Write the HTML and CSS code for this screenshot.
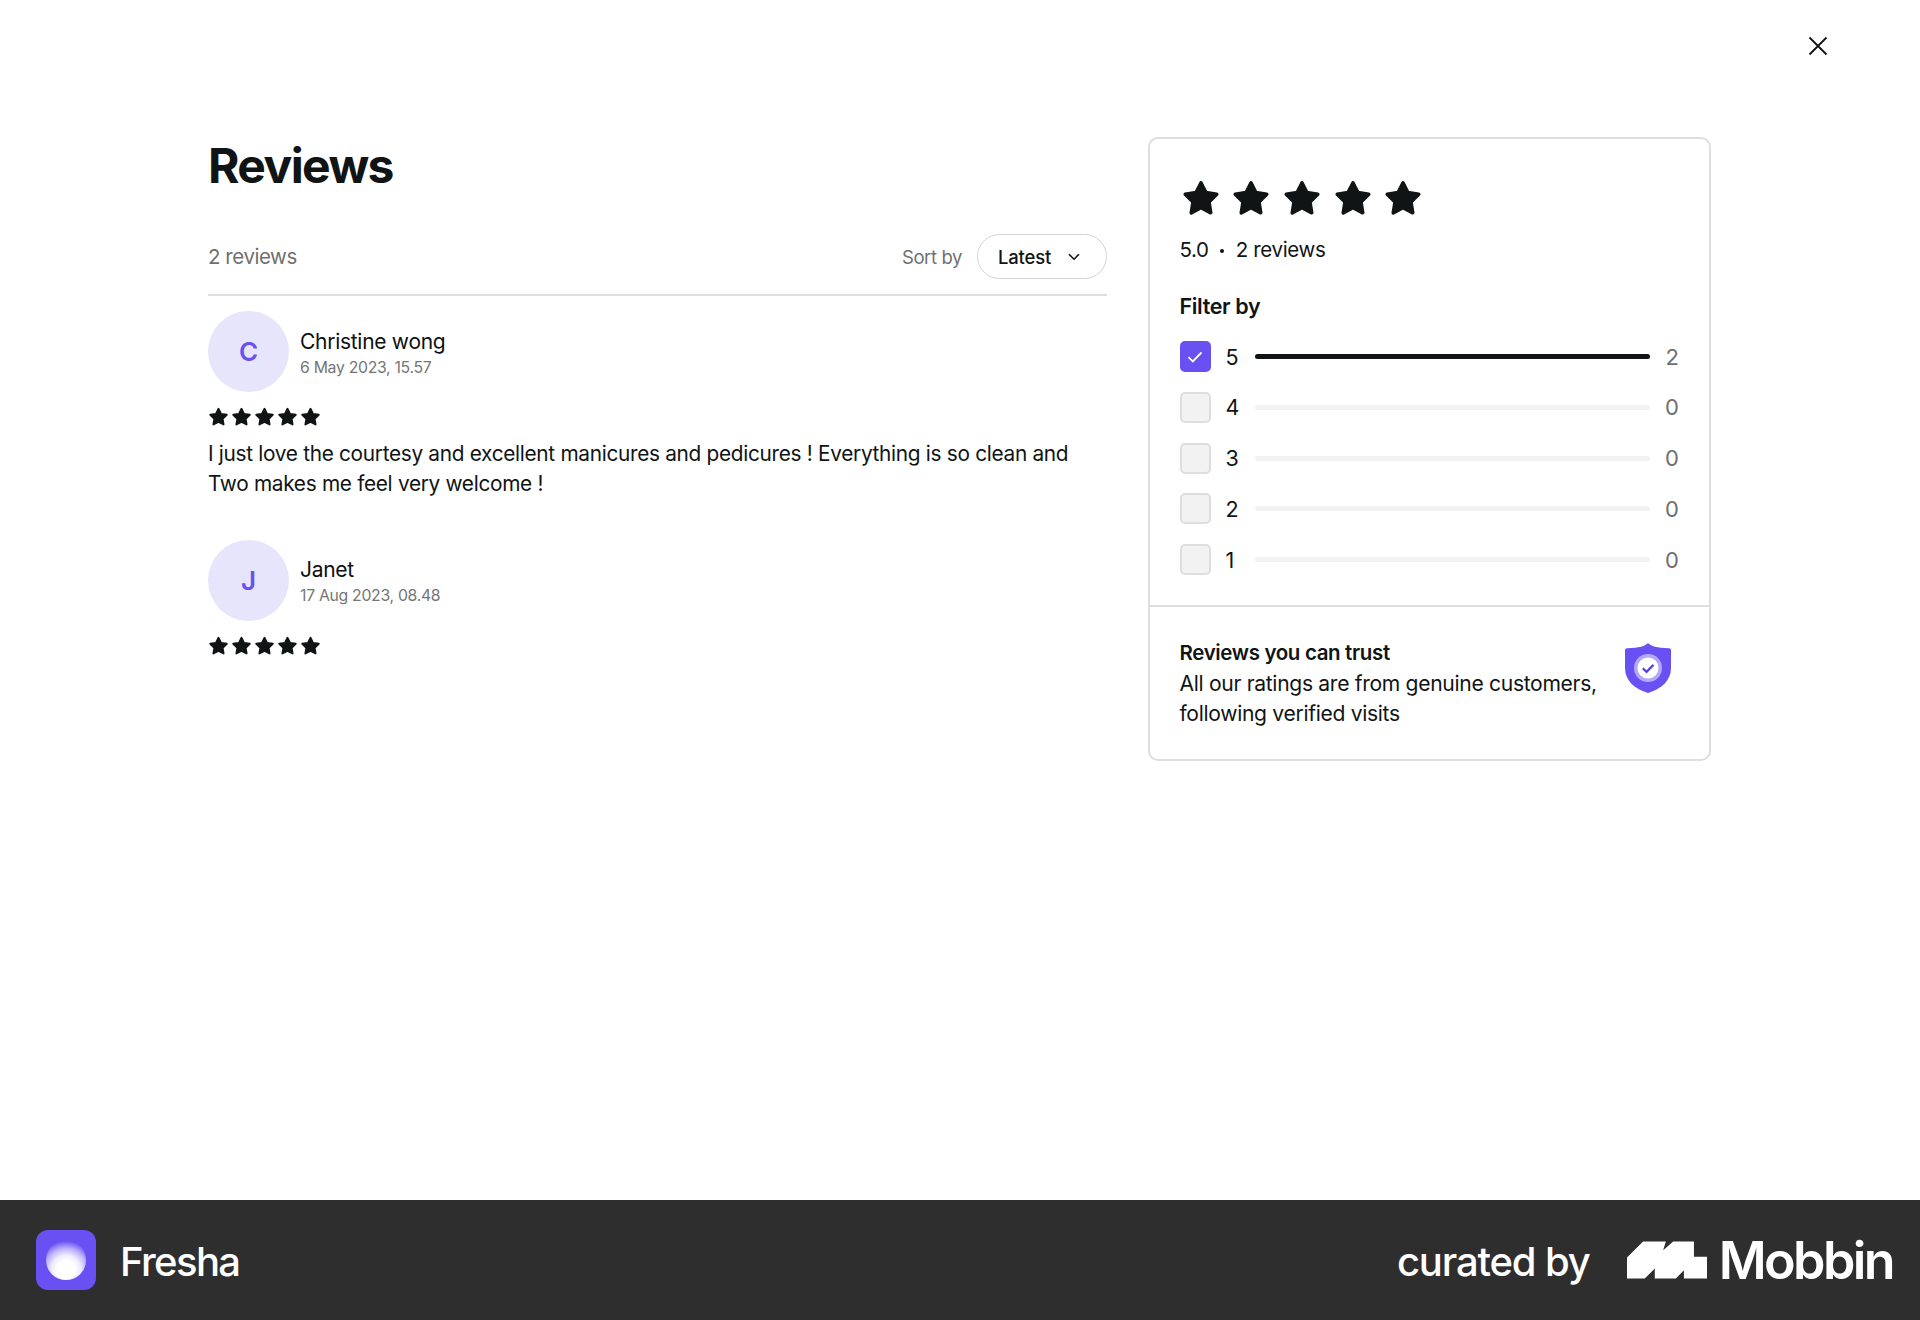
FILE: index.html
```html
<!DOCTYPE html>
<html lang="en">
<head>
<meta charset="utf-8">
<title>Fresha reviews</title>
<link rel="stylesheet" href="styles.css">
</head>
<body>
<svg class="defs" width="0" height="0" aria-hidden="true">
  <symbol id="star" viewBox="0 0 24 24">
    <path d="M12 3L14.82 8.62L21.03 9.56L16.57 13.98L17.58 20.19L12 17.3L6.42 20.19L7.43 13.98L2.97 9.56L9.18 8.62Z" fill="currentColor" stroke="currentColor" stroke-width="2" stroke-linejoin="round"/>
  </symbol>
</svg>
<div class="page">
  <main class="main">
    <button class="close" aria-label="Close">
      <svg viewBox="0 0 20 20" width="20" height="20"><path d="M1.5 1.5l17 17M18.5 1.5l-17 17" fill="none" stroke="#101414" stroke-width="1.8"/></svg>
    </button>
    <section class="reviews">
      <h1 class="title">Reviews</h1>
      <div class="toolbar">
        <span class="count">2 reviews</span>
        <div class="sort">
          <span class="sort-label">Sort by</span>
          <button class="sort-btn">Latest
            <svg viewBox="0 0 12 8" width="12" height="8"><path d="M1 1.200l5 5 5-5" fill="none" stroke="#101414" stroke-width="1.600"/></svg>
          </button>
        </div>
      </div>
      <article class="review">
        <div class="author">
          <div class="avatar">C</div>
          <div class="who">
            <div class="name">Christine wong</div>
            <div class="date">6 May 2023, 15.57</div>
          </div>
        </div>
        <div class="stars small">
          <svg><use href="#star"/></svg><svg><use href="#star"/></svg><svg><use href="#star"/></svg><svg><use href="#star"/></svg><svg><use href="#star"/></svg>
        </div>
        <p class="body">I just love the courtesy and excellent manicures and pedicures ! Everything is so clean and Two makes me feel very welcome !</p>
      </article>
      <article class="review">
        <div class="author">
          <div class="avatar">J</div>
          <div class="who">
            <div class="name">Janet</div>
            <div class="date">17 Aug 2023, 08.48</div>
          </div>
        </div>
        <div class="stars small">
          <svg><use href="#star"/></svg><svg><use href="#star"/></svg><svg><use href="#star"/></svg><svg><use href="#star"/></svg><svg><use href="#star"/></svg>
        </div>
      </article>
    </section>
    <aside class="card">
      <div class="card-top">
        <div class="stars large">
          <svg><use href="#star"/></svg><svg><use href="#star"/></svg><svg><use href="#star"/></svg><svg><use href="#star"/></svg><svg><use href="#star"/></svg>
        </div>
        <div class="score"><span>5.0</span><span class="dot"></span><span>2 reviews</span></div>
        <div class="filter-title">Filter by</div>
        <div class="filters">
          <div class="filter">
            <span class="check on"><svg viewBox="0 0 16 12" width="16" height="12"><path d="M1.500 6.200l4.300 4.200L14.500 1.500" fill="none" stroke="#fff" stroke-width="1.800"/></svg></span>
            <span class="num">5</span>
            <span class="bar"><span class="fill full"></span></span>
            <span class="total">2</span>
          </div>
          <div class="filter"><span class="check"></span><span class="num">4</span><span class="bar"></span><span class="total">0</span></div>
          <div class="filter"><span class="check"></span><span class="num">3</span><span class="bar"></span><span class="total">0</span></div>
          <div class="filter"><span class="check"></span><span class="num">2</span><span class="bar"></span><span class="total">0</span></div>
          <div class="filter"><span class="check"></span><span class="num">1</span><span class="bar"></span><span class="total">0</span></div>
        </div>
      </div>
      <div class="trust">
        <div class="trust-text">
          <div class="trust-title">Reviews you can trust</div>
          <div>All our ratings are from genuine customers, following verified visits</div>
        </div>
        <svg class="shield" viewBox="0 0 46 50" width="46" height="50">
          <path d="M23 0c2.500 3 9 5 21 5.300c1.300 0 2 .7 2 2V25c0 13-10 21-23 25C10 46 0 38 0 25V7.300c0-1.300.7-2 2-2C14 5 20.500 3 23 0z" fill="#6950f3"/>
          <circle cx="23" cy="25" r="14" fill="#b3a7f8"/>
          <circle cx="23" cy="25" r="10.500" fill="#fff"/>
          <path d="M17.800 25.300l3.700 3.600 7-7" fill="none" stroke="#5b43d6" stroke-width="2.200"/>
        </svg>
      </div>
    </aside>
  </main>
  <footer class="footer">
    <div class="brand">
      <div class="app-icon"><div class="glow"></div></div>
      <span class="app-name">Fresha</span>
    </div>
    <div class="curated">
      <span class="curated-by">curated by</span>
      <svg class="mobbin-mark" viewBox="52 32 239 111" width="80" height="38"><path d="M52 80L100 32H168L160 58L190 32H252V78H291V143H222V118L198 143H135V113L105 143H52z" fill="#fff"/></svg>
      <span class="mobbin">Mobbin</span>
    </div>
  </footer>
</div>
</body>
</html>
```
FILE: styles.css
```css
* { box-sizing: border-box; }
html, body { margin: 0; padding: 0; }
body { font-family: Inter, "Liberation Sans", sans-serif; color: #101414; background: #fff; }
.defs { position: absolute; }
.page { width: 1920px; height: 1320px; display: flex; flex-direction: column; }
.main { position: relative; flex: 1; display: flex; align-items: flex-start; gap: 41px; padding: 137px 0 0 208px; }
.close { position: absolute; top: 36px; right: 92px; width: 20px; height: 20px; padding: 0; border: 0; background: none; }
.close svg { display: block; }

.reviews { width: 899px; }
.title { margin: 1px 0 0; font-size: 48px; line-height: 56px; font-weight: 700; letter-spacing: -1.600px; }
.toolbar { margin-top: 40px; padding-bottom: 15px; border-bottom: 2px solid #dedede; display: flex; justify-content: space-between; align-items: center; }
.count { font-size: 20.500px; color: #6f6f6f; letter-spacing: -0.450px; }
.sort { display: flex; align-items: center; gap: 15px; }
.sort-label { font-size: 18.500px; color: #707070; letter-spacing: -0.400px; }
.sort-btn { width: 130px; height: 45px; padding: 0 0 0 20px; display: flex; align-items: center; gap: 17px; border: 1px solid #d3d3d3; border-radius: 23px; background: #fff; font: 500 18.500px Inter, sans-serif; color: #101414; letter-spacing: -0.200px; }

.review + .review { margin-top: 40px; }
.review:first-of-type { padding-top: 15px; }
.author { display: flex; align-items: center; gap: 11px; }
.avatar { width: 81px; height: 81px; border-radius: 50%; background: #e7e5fc; color: #6950f3; display: flex; align-items: center; justify-content: center; font-size: 26px; font-weight: 600; }
.who { padding-top: 3px; }
.name { font-size: 21px; line-height: 28px; font-weight: 400; letter-spacing: -0.280px; color: #0d1010; }
.date { font-size: 15.800px; line-height: 23px; color: #757575; letter-spacing: -0.300px; }
.stars { display: flex; color: #101414; }
.stars.small { margin: 13px 0 0 -1px; height: 24px; align-items: center; }
.stars.small svg { width: 23px; height: 22px; }
.stars.large { height: 43px; gap: 8.700px; }
.stars.large svg { width: 42px; height: 43px; }
.body { margin: 9.500px 0 0; font-size: 20.800px; line-height: 30.600px; letter-spacing: -0.300px; max-width: 880px; }

.card { width: 563px; height: 624px; border: 2px solid #dedede; border-radius: 10px; background: #fff; display: flex; flex-direction: column; }
.card-top { padding: 37.500px 30px 0 29.500px; height: 468px; border-bottom: 2px solid #dedede; }
.score { margin-top: 16px; display: flex; align-items: center; font-size: 20.500px; line-height: 28px; letter-spacing: -0.350px; }
.dot { width: 4px; height: 4px; margin: 2px 11.500px 0; border-radius: 50%; background: #101414; }
.filter-title { margin-top: 28px; font-size: 21.500px; line-height: 28px; font-weight: 600; letter-spacing: -0.350px; }
.filters { margin-top: 22px; display: flex; flex-direction: column; gap: 20.800px; }
.filter { display: flex; align-items: center; height: 30px; }
.check { width: 31px; height: 31px; flex: none; border: 2px solid #dedede; border-radius: 5px; background: #f2f2f2; display: flex; align-items: center; justify-content: center; }
.check.on { background: #6950f3; border-color: #6950f3; }
.num { width: 44.500px; padding-left: 15px; font-size: 21.500px; color: #101414; }
.bar { width: 395px; height: 5px; border-radius: 3px; background: #f2f2f2; display: block; }
.fill { display: block; height: 100%; border-radius: 3px; background: #101414; }
.fill.full { width: 100%; }
.total { margin-left: auto; font-size: 22px; color: #6f6f6f; }

.trust { display: flex; justify-content: space-between; padding: 31px 38px 0 29.500px; }
.trust-text { width: 430px; font-size: 21.100px; line-height: 30.600px; letter-spacing: -0.320px; }
.trust-title { font-size: 20.500px; font-weight: 600; letter-spacing: -0.350px; }
.shield { flex: none; margin-top: 5px; }

.footer { height: 120px; background: #2e2e2e; color: #fff; display: flex; align-items: center; justify-content: space-between; padding: 0 27px 0 36px; }
.brand { display: flex; align-items: center; gap: 24px; }
.app-icon { width: 60px; height: 60px; border-radius: 12px; background: #6950f3; display: flex; justify-content: center; padding-top: 10px; }
.glow { width: 40px; height: 40px; border-radius: 50%; background: radial-gradient(circle at 50% 74%, #fff 0, #fff 24%, #f0edff 40%, #b9adf9 60%, #6950f3 80%); }
.app-name { font-size: 40px; font-weight: 500; letter-spacing: -1.600px; padding-top: 2px; }
.curated { display: flex; align-items: center; }
.curated-by { font-size: 40px; font-weight: 500; letter-spacing: -1.150px; margin-right: 37px; padding-top: 2px; }
.mobbin-mark { display: block; margin-right: 12px; }
.mobbin { font-size: 52px; font-weight: 600; letter-spacing: -2.600px; }
```
